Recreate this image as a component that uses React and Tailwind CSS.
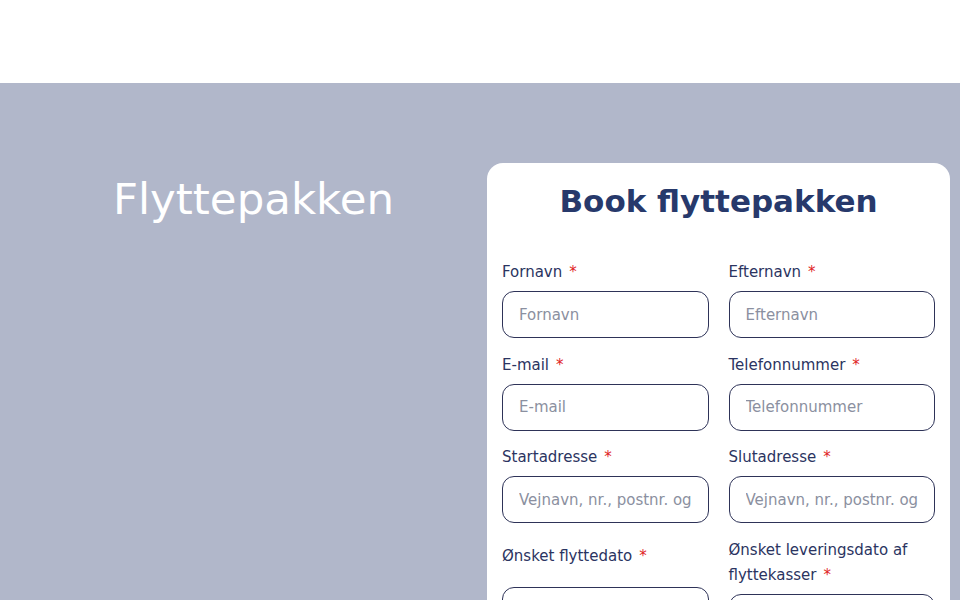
import React from 'react';

const Field = ({ label, placeholder, labelClass = 'pt-px mb-[6px]', type = 'text' }) => (
  <div className="flex flex-col">
    <label className={`text-[15px] leading-[25px] text-[#2b3461] ${labelClass}`}>
      {label}
      <span className="ml-[7px] text-[#e02424]">*</span>
    </label>
    <input
      type={type}
      placeholder={placeholder}
      className="h-[47px] w-full rounded-xl border border-[#2e3358] bg-white px-4 text-[15px] text-[#2b3461] placeholder:text-[#8b90a0] outline-none"
    />
  </div>
);

export default function App() {
  return (
    <div className="min-h-screen bg-[#b1b7ca] font-['DejaVu_Sans',sans-serif]">
      <header className="h-[83px] bg-white" />

      <main className="flex items-start pt-20 pl-5 pr-[10px]">
        {/* Left headline */}
        <div className="flex-1 text-center">
          <h1 className="mt-[10px] text-[43.5px] leading-[52px] text-white">Flyttepakken</h1>
        </div>

        {/* Booking card */}
        <div className="w-[463px] rounded-2xl bg-white px-[15px] pt-5 pb-10">
          <h2 className="text-center text-[31px] font-bold leading-9 text-[#27396b]">
            Book flyttepakken
          </h2>

          <div className="mt-10 grid grid-cols-2 gap-x-5 gap-y-[13.5px]">
            <Field label="Fornavn" placeholder="Fornavn" />
            <Field label="Efternavn" placeholder="Efternavn" />
            <Field label="E-mail" placeholder="E-mail" />
            <Field label="Telefonnummer" placeholder="Telefonnummer" />
            <Field label="Startadresse" placeholder="Vejnavn, nr., postnr. og by" />
            <Field label="Slutadresse" placeholder="Vejnavn, nr., postnr. og by" />
            <Field label="Ønsket flyttedato" placeholder="" labelClass="pt-[7px] mb-[18px]" />
            <Field label="Ønsket leveringsdato af flyttekasser" placeholder="" labelClass="pt-px mb-[6px]" />
          </div>
        </div>
      </main>
    </div>
  );
}
